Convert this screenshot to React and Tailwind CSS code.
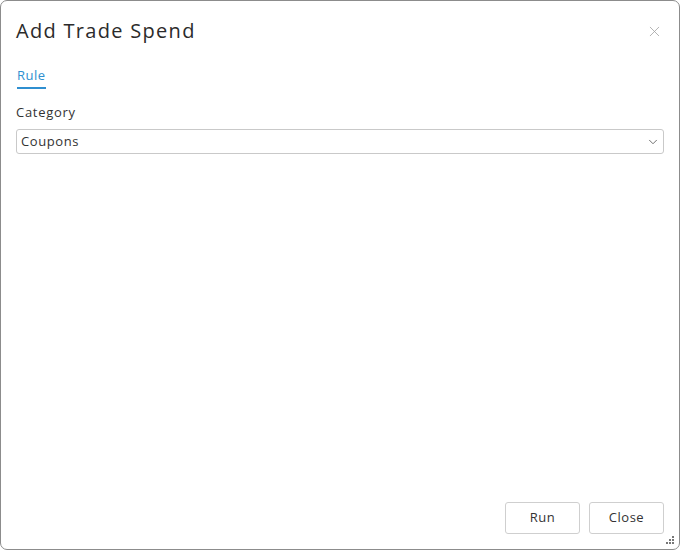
import { X, ChevronDown } from 'lucide-react'

export default function App() {
  return (
    <div className="w-[680px] h-[550px] bg-white">
      <div
        className="relative w-full h-full flex flex-col border border-[#8c8c8c] rounded-[7px] bg-white text-[#333]"
        style={{ fontFamily: '"Open Sans", "Noto Sans", sans-serif' }}
      >
        {/* Header */}
        <div className="flex items-center justify-between pl-[15px] pr-[16px] pt-[16px]">
          <h2 className="text-[20px] leading-[28px] font-normal text-[#2b2b2b] tracking-[1.3px]">Add Trade Spend</h2>
          <button className="text-[#a0a0a0]">
            <X size={17} strokeWidth={1.1} />
          </button>
        </div>

        {/* Tabs */}
        <div className="px-[15px] mt-[17px]">
          <div className="inline-flex flex-col">
            <span className="text-[13px] leading-[17px] text-[#2f8fd0] tracking-[0.5px] px-[1px]">Rule</span>
            <span className="mt-[3px] h-[2px] mx-[1px] bg-[#2f8fd0]" />
          </div>
        </div>

        {/* Form */}
        <div className="px-[15px] mt-[15px]">
          <label className="block text-[13px] leading-[17px] tracking-[0.7px] text-[#333]">Category</label>
          <div className="mt-[8px] h-[25px] flex items-center justify-between border border-[#c9c9c9] rounded-[3px] pl-[4px] pr-[3px]">
            <span className="text-[13px] tracking-[0.6px] text-[#333]">Coupons</span>
            <ChevronDown size={14} strokeWidth={1.6} className="text-[#666]" />
          </div>
        </div>

        <div className="flex-1" />

        {/* Footer */}
        <div className="flex justify-end gap-[9px] pr-[15px] pb-[15px]">
          <button className="w-[75px] h-[32px] border border-[#cfcfcf] rounded-[3px] text-[13px] tracking-[0.5px] text-[#333] bg-white">Run</button>
          <button className="w-[75px] h-[32px] border border-[#cfcfcf] rounded-[3px] text-[13px] tracking-[0.5px] text-[#333] bg-white">Close</button>
        </div>

        {/* Resize grip */}
        <svg className="absolute right-[5px] bottom-[5px]" width="8" height="8" viewBox="0 0 8 8">
          <rect x="6" y="0" width="2" height="2" fill="#777" />
          <rect x="3" y="3" width="2" height="2" fill="#777" />
          <rect x="6" y="3" width="2" height="2" fill="#777" />
          <rect x="0" y="6" width="2" height="2" fill="#777" />
          <rect x="3" y="6" width="2" height="2" fill="#777" />
          <rect x="6" y="6" width="2" height="2" fill="#777" />
        </svg>
      </div>
    </div>
  )
}
